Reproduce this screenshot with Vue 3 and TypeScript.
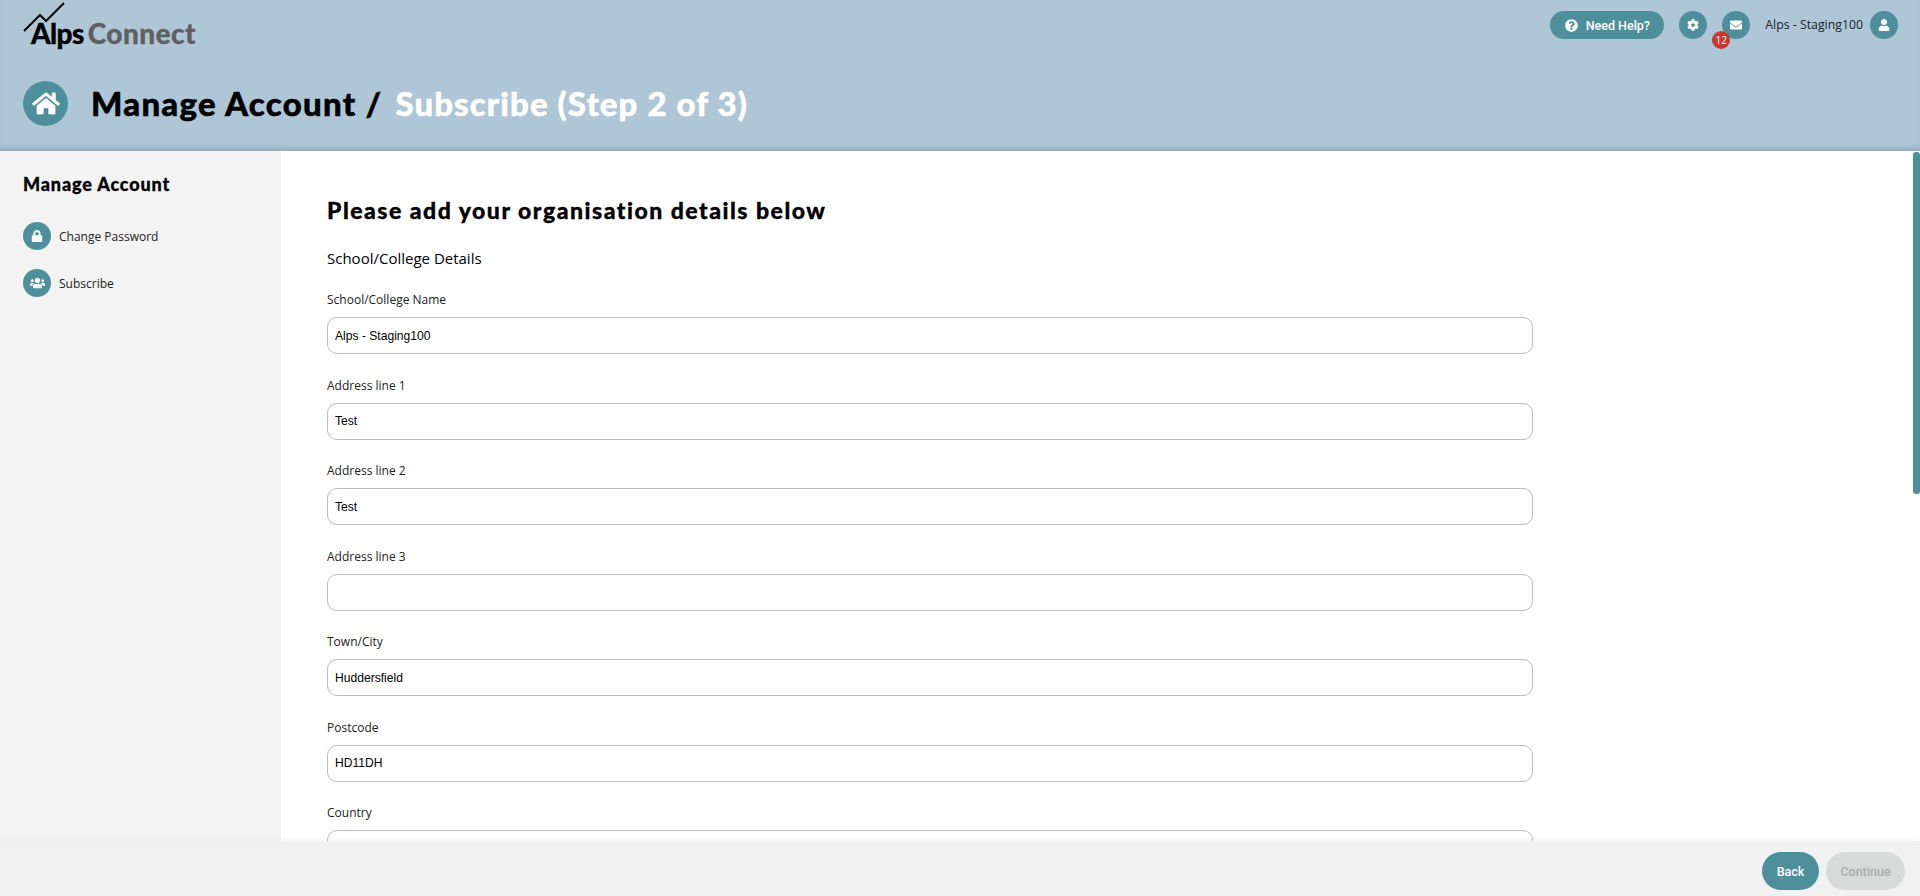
<template>
  <div class="page">
    <header class="top">
      <div class="top-row">
        <div class="logo">
          <svg class="logo-line" viewBox="0 0 42 30" width="42" height="30">
            <path d="M1 29 L17 13 L23 19 L41 1" fill="none" stroke="#000" stroke-width="2" />
          </svg>
          <span class="logo-alps">Alps</span><span class="logo-connect">Connect</span>
        </div>
        <div class="top-actions">
          <button class="help">
            <svg class="help-icon" viewBox="0 0 512 512"><path :d="icons.question" /></svg>
            Need Help?
          </button>
          <span class="round"><svg class="i13" viewBox="0 0 512 512"><path :d="icons.cog" /></svg></span>
          <span class="round mail">
            <svg class="i13" viewBox="0 0 512 512"><path :d="icons.envelope" /></svg>
            <span class="badge">12</span>
          </span>
          <span class="user-name">Alps - Staging100</span>
          <span class="round"><svg class="i13" viewBox="0 0 448 512"><path :d="icons.user" /></svg></span>
        </div>
      </div>
      <div class="title-row">
        <span class="home"><svg class="home-icon" viewBox="0 0 576 512"><path :d="icons.home" /></svg></span>
        <h1>Manage Account <span class="slash">/</span> <span class="step">Subscribe (Step 2 of 3)</span></h1>
      </div>
    </header>

    <div class="middle">
      <aside class="side">
        <h3>Manage Account</h3>
        <a class="side-link">
          <span class="round"><svg class="i13" viewBox="0 0 448 512"><path :d="icons.lock" /></svg></span>
          Change Password
        </a>
        <a class="side-link">
          <span class="round"><svg class="i15" viewBox="0 0 640 512"><path :d="icons.users" /></svg></span>
          Subscribe
        </a>
      </aside>

      <main class="content">
        <div class="inner">
          <h2>Please add your organisation details below</h2>
          <h4>School/College Details</h4>
          <div v-for="f in fields" :key="f.label" class="field">
            <label>{{ f.label }}</label>
            <input type="text" :value="f.value" />
          </div>
        </div>
      </main>
      <div class="thumb"></div>
    </div>

    <footer class="bottom">
      <button class="btn back">Back</button>
      <button class="btn next" disabled>Continue</button>
    </footer>
  </div>
</template>

<script setup lang="ts">
const fields = [
  { label: 'School/College Name', value: 'Alps - Staging100' },
  { label: 'Address line 1', value: 'Test' },
  { label: 'Address line 2', value: 'Test' },
  { label: 'Address line 3', value: '' },
  { label: 'Town/City', value: 'Huddersfield' },
  { label: 'Postcode', value: 'HD11DH' },
  { label: 'Country', value: '' }
]

const icons = {
  home: 'M280.37 148.26L96 300.11V464a16 16 0 0 0 16 16l112.06-.29a16 16 0 0 0 15.92-16V368a16 16 0 0 1 16-16h64a16 16 0 0 1 16 16v95.64a16 16 0 0 0 16 16.05L464 480a16 16 0 0 0 16-16V300L295.67 148.26a12.19 12.19 0 0 0-15.3 0zM571.6 251.47L488 182.56V44.05a12 12 0 0 0-12-12h-56a12 12 0 0 0-12 12v72.61L318.47 43a48 48 0 0 0-61 0L4.34 251.47a12 12 0 0 0-1.6 16.9l25.5 31A12 12 0 0 0 45.15 301l235.22-193.74a12.19 12.19 0 0 1 15.3 0L530.9 301a12 12 0 0 0 16.9-1.6l25.5-31a12 12 0 0 0-1.7-16.93z',
  question: 'M504 256c0 136.997-111.043 248-248 248S8 392.997 8 256C8 119.083 119.043 8 256 8s248 111.083 248 248zM262.655 90c-54.497 0-89.255 22.957-116.549 63.758-3.536 5.286-2.353 12.415 2.715 16.258l34.699 26.31c5.205 3.947 12.621 3.008 16.665-2.122 17.864-22.658 30.113-35.797 57.303-35.797 20.429 0 45.698 13.148 45.698 32.958 0 14.976-12.363 22.667-32.534 33.976C247.128 238.528 216 254.941 216 296v4c0 6.627 5.373 12 12 12h56c6.627 0 12-5.373 12-12v-1.333c0-28.462 83.186-29.647 83.186-106.667 0-58.002-60.165-102-116.531-102zM256 338c-25.365 0-46 20.635-46 46 0 25.364 20.635 46 46 46s46-20.636 46-46c0-25.365-20.635-46-46-46z',
  cog: 'M487.4 315.7l-42.6-24.6c4.3-23.2 4.3-47 0-70.2l42.6-24.6c4.9-2.8 7.1-8.6 5.5-14-11.1-35.6-30-67.8-54.7-94.6-3.8-4.1-10-5.1-14.8-2.3L380.8 110c-17.9-15.4-38.5-27.3-60.8-35.1V25.8c0-5.6-3.9-10.5-9.4-11.7-36.7-8.2-74.3-7.8-109.2 0-5.5 1.2-9.4 6.1-9.4 11.7V75c-22.2 7.9-42.8 19.8-60.8 35.1L88.7 85.5c-4.9-2.8-11-1.9-14.8 2.3-24.7 26.7-43.6 58.9-54.7 94.6-1.7 5.4.6 11.2 5.5 14L67.3 221c-4.3 23.2-4.3 47 0 70.2l-42.6 24.6c-4.9 2.8-7.1 8.6-5.5 14 11.1 35.6 30 67.8 54.7 94.6 3.8 4.1 10 5.1 14.8 2.3l42.6-24.6c17.9 15.4 38.5 27.3 60.8 35.1v49.2c0 5.6 3.9 10.5 9.4 11.7 36.7 8.2 74.3 7.8 109.2 0 5.5-1.2 9.4-6.1 9.4-11.7v-49.2c22.2-7.9 42.8-19.8 60.8-35.1l42.6 24.6c4.9 2.8 11 1.9 14.8-2.3 24.7-26.7 43.6-58.9 54.7-94.6 1.5-5.5-.7-11.3-5.6-14.1zM256 336c-44.1 0-80-35.9-80-80s35.9-80 80-80 80 35.9 80 80-35.9 80-80 80z',
  envelope: 'M502.3 190.8c3.9-3.1 9.7-.2 9.7 4.7V400c0 26.5-21.5 48-48 48H48c-26.5 0-48-21.5-48-48V195.6c0-5 5.7-7.8 9.7-4.7 22.4 17.4 52.1 39.5 154.1 113.6 21.1 15.4 56.7 47.8 92.2 47.6 35.7.3 72-32.8 92.3-47.6 102-74.1 131.6-96.3 154-113.7zM256 320c23.2.4 56.6-29.2 73.4-41.4 132.7-96.3 142.8-104.7 173.4-128.7 5.8-4.5 9.2-11.5 9.2-18.9v-19c0-26.5-21.5-48-48-48H48C21.5 64 0 85.5 0 112v19c0 7.4 3.4 14.3 9.2 18.9 30.6 23.9 40.7 32.4 173.4 128.7 16.8 12.2 50.2 41.8 73.4 41.4z',
  user: 'M224 256c70.7 0 128-57.3 128-128S294.7 0 224 0 96 57.3 96 128s57.3 128 128 128zm89.6 32h-16.7c-22.2 10.2-46.9 16-72.9 16s-50.6-5.8-72.9-16h-16.7C60.2 288 0 348.2 0 422.4V464c0 26.5 21.5 48 48 48h352c26.5 0 48-21.5 48-48v-41.6c0-74.2-60.2-134.4-134.4-134.4z',
  lock: 'M400 224h-24v-72C376 68.2 307.8 0 224 0S72 68.2 72 152v72H48c-26.5 0-48 21.5-48 48v192c0 26.5 21.5 48 48 48h352c26.5 0 48-21.5 48-48V272c0-26.5-21.5-48-48-48zm-104 0H152v-72c0-39.7 32.3-72 72-72s72 32.3 72 72v72z',
  users: 'M96 224c35.3 0 64-28.7 64-64s-28.7-64-64-64-64 28.7-64 64 28.7 64 64 64zm448 0c35.3 0 64-28.7 64-64s-28.7-64-64-64-64 28.7-64 64 28.7 64 64 64zm32 32h-64c-17.6 0-33.5 7.1-45.1 18.6 40.3 22.1 68.9 62 75.1 109.4h66c17.7 0 32-14.3 32-32v-32c0-35.3-28.7-64-64-64zm-256 0c61.9 0 112-50.1 112-112S381.9 32 320 32 208 82.1 208 144s50.1 112 112 112zm76.8 32h-8.3c-20.8 10-43.9 16-68.5 16s-47.6-6-68.5-16h-8.3C179.6 288 128 339.6 128 403.2V432c0 26.5 21.5 48 48 48h288c26.5 0 48-21.5 48-48v-28.8c0-63.6-51.6-115.2-115.2-115.2zm-223.7-13.4C161.5 263.1 145.6 256 128 256H64c-35.3 0-64 28.7-64 64v32c0 17.7 14.3 32 32 32h65.9c6.3-47.4 34.9-87.3 75.2-109.4z'
}
</script>

<style>
html, body { margin: 0; height: 100%; overflow: hidden; }
</style>

<style scoped>
.page {
  display: flex;
  flex-direction: column;
  height: 100vh;
  font-family: "Open Sans", "Liberation Sans", sans-serif;
  color: #222;
  background: #fff;
}

/* header */
.top {
  flex: 0 0 151px;
  box-sizing: border-box;
  background: #aec6d6;
  box-shadow: inset 0 -6px 6px -5px rgba(70, 100, 120, 0.45);
  padding: 0 22px 0 23px;
  position: relative;
  z-index: 3;
}
.top-row {
  display: flex;
  justify-content: space-between;
  height: 81px;
}
.logo {
  position: relative;
  padding: 17px 0 0 8px;
  height: 32px;
  font-family: Lato, "Liberation Sans", sans-serif;
  font-size: 28px;
  line-height: 32px;
  font-weight: 900;
  -webkit-text-stroke: 0.3px currentColor;
}
.logo-line { position: absolute; left: 0; top: 2px; }
.logo-alps { color: #000; letter-spacing: -0.6px; }
.logo-connect { color: #5f6062; margin-left: 4px; letter-spacing: 0.45px; }

.top-actions {
  display: flex;
  align-items: flex-start;
  padding-top: 11px;
}
.help {
  display: flex;
  align-items: center;
  justify-content: center;
  gap: 8px;
  width: 114px;
  height: 28px;
  border: 0;
  border-radius: 14px;
  padding: 0;
  background: #4d8f9b;
  color: #fff;
  font-family: Roboto, "Liberation Sans", sans-serif;
  font-size: 12.5px;
  font-weight: 500;
  margin-right: 15px;
}
.help-icon { width: 13px; height: 13px; fill: #fff; }
.round {
  flex: none;
  display: inline-flex;
  align-items: center;
  justify-content: center;
  width: 28px;
  height: 28px;
  border-radius: 50%;
  background: #4d8f9b;
}
.round svg { fill: #fff; }
.i13 { width: 12px; height: 12px; }
.i15 { width: 15px; height: 12px; }
.mail { position: relative; margin-left: 15px; }
.badge {
  position: absolute;
  left: -10px;
  top: 20px;
  width: 18px;
  height: 18px;
  border-radius: 50%;
  background: #c63a2f;
  color: #fff;
  font-size: 10px;
  line-height: 18px;
  text-align: center;
}
.user-name {
  font-size: 12.3px;
  line-height: 28px;
  color: #1c2430;
  margin: 0 7px 0 15px;
}

.title-row {
  display: flex;
  align-items: center;
  gap: 23px;
  height: 45px;
}
.home {
  display: flex;
  align-items: center;
  justify-content: center;
  width: 45px;
  height: 45px;
  border-radius: 50%;
  background: #4d8f9b;
}
.home-icon { width: 28px; height: 25px; fill: #fff; }
h1 {
  margin: 0;
  font-family: Lato, "Liberation Sans", sans-serif;
  font-size: 33px;
  font-weight: 900;
  letter-spacing: 1.25px;
  -webkit-text-stroke: 0.5px currentColor;
  color: #000;
  line-height: 45px;
  white-space: nowrap;
}
.step { color: #fff; margin-left: 4px; letter-spacing: 1.08px; }

/* body */
.middle {
  flex: 1;
  display: flex;
  min-height: 0;
  position: relative;
}
.side {
  flex: 0 0 281px;
  box-sizing: border-box;
  background: #f3f3f3;
  padding: 21px 23px 0;
}
.side h3 {
  margin: 0 0 26px;
  font-family: Lato, "Liberation Sans", sans-serif;
  font-size: 18px;
  line-height: 24px;
  font-weight: 900;
  letter-spacing: 0.85px;
  -webkit-text-stroke: 0.3px currentColor;
  color: #000;
}
.side-link {
  display: flex;
  align-items: center;
  gap: 8px;
  height: 28px;
  margin-bottom: 19px;
  font-size: 12px;
  color: #222;
}

.content {
  flex: 1;
  overflow-y: hidden;
}
.thumb {
  position: absolute;
  right: 0;
  top: 1px;
  width: 7px;
  height: 342px;
  background: #4d8f9b;
  border-radius: 3px;
}
.inner {
  box-sizing: border-box;
  min-height: 1388px;
  padding: 45px 0 0 46px;
  width: 1252px;
}
h2 {
  margin: 0;
  font-family: Lato, "Liberation Sans", sans-serif;
  font-size: 23px;
  line-height: 28px;
  font-weight: 900;
  letter-spacing: 1.5px;
  -webkit-text-stroke: 0.35px currentColor;
  color: #000;
}
h4 {
  margin: 24px 0 24px;
  font-size: 15px;
  line-height: 20px;
  font-weight: 400;
  color: #000;
}
.field {
  height: 85.5px;
}
.field label {
  display: block;
  font-size: 12px;
  line-height: 16px;
  color: #222;
  margin-bottom: 9px;
}
.field input {
  display: block;
  box-sizing: border-box;
  width: 1206px;
  height: 37px;
  border: 1px solid #bbb;
  border-radius: 10px;
  padding: 0 7px;
  background: #fff;
  font-family: "Liberation Sans", sans-serif;
  font-size: 12.1px;
  color: #000;
  outline: none;
}

/* footer */
.bottom {
  flex: 0 0 55px;
  box-sizing: border-box;
  display: flex;
  justify-content: flex-end;
  align-items: flex-start;
  gap: 7px;
  padding: 11px 15px 0 0;
  background: #f1f1f1;
  box-shadow: 0 -2px 5px rgba(0, 0, 0, 0.04);
  position: relative;
  z-index: 2;
}
.btn {
  height: 38px;
  border: 0;
  border-radius: 19px;
  padding: 0;
  font-family: Roboto, "Liberation Sans", sans-serif;
  font-size: 12.5px;
  font-weight: 500;
}
.back { width: 57px; background: #4d8f9b; color: #fff; }
.next { width: 79px; background: #d8dad9; color: #a9abab; }
</style>
